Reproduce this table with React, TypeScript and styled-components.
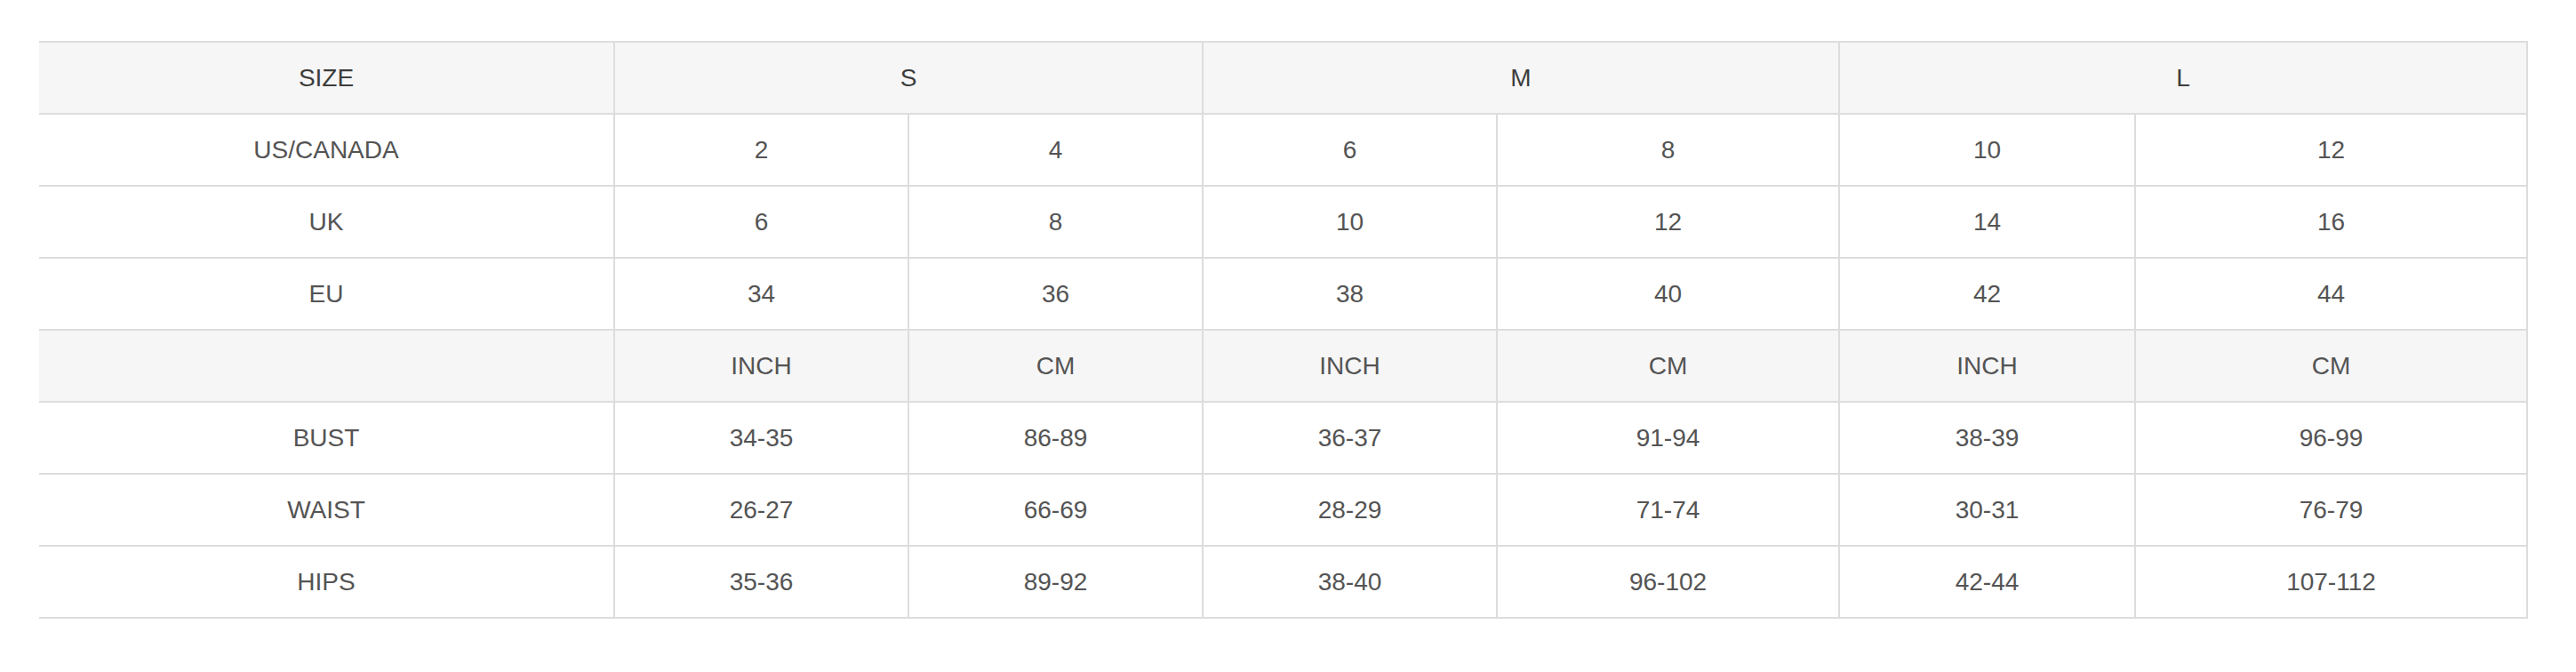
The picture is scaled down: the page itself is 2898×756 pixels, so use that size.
import React from 'react';
import styled, {createGlobalStyle} from 'styled-components';

const GlobalStyle = createGlobalStyle`
    html, body {
        margin: 0;
        padding: 0;
        background: #fff;
    }
    body {
        font-family: "Liberation Sans", Arial, Helvetica, sans-serif;
    }
`

type Cell = { text: string; span?: number };

const header: Cell[] = [
    {text: 'SIZE'},
    {text: 'S', span: 2},
    {text: 'M', span: 2},
    {text: 'L', span: 2},
];

const sizeRows: string[][] = [
    ['US/CANADA', '2', '4', '6', '8', '10', '12'],
    ['UK', '6', '8', '10', '12', '14', '16'],
    ['EU', '34', '36', '38', '40', '42', '44'],
];

const unitRow: string[] = ['', 'INCH', 'CM', 'INCH', 'CM', 'INCH', 'CM'];

const measureRows: string[][] = [
    ['BUST', '34-35', '86-89', '36-37', '91-94', '38-39', '96-99'],
    ['WAIST', '26-27', '66-69', '28-29', '71-74', '30-31', '76-79'],
    ['HIPS', '35-36', '89-92', '38-40', '96-102', '42-44', '107-112'],
];

export default function App() {
    return (
        <Page>
            <GlobalStyle/>
            <SizeTable>
                {header.map((c) => (
                    <TableCell key={c.text} $span={c.span} $shaded $head>{c.text}</TableCell>
                ))}
                {sizeRows.map((row) =>
                    row.map((v, i) => <TableCell key={row[0] + i}>{v}</TableCell>)
                )}
                {unitRow.map((v, i) => (
                    <TableCell key={'unit' + i} $shaded>{v}</TableCell>
                ))}
                {measureRows.map((row) =>
                    row.map((v, i) => <TableCell key={row[0] + i}>{v}</TableCell>)
                )}
            </SizeTable>
        </Page>
    );
}

const Page = styled.div`
    padding: 46px 54px 60px 44px;
    background: #fff;
`

const SizeTable = styled.div`
    display: grid;
    grid-template-columns: 648px 331px 331px 331px 385px 333px 441px;
    grid-auto-rows: 81px;
    width: 2800px;
    border-top: 2px solid #dddddd;
`

const TableCell = styled.div<{ $span?: number; $shaded?: boolean; $head?: boolean }>`
    grid-column: span ${(p) => p.$span || 1};
    display: flex;
    align-items: center;
    justify-content: center;
    box-sizing: border-box;
    border-right: 2px solid #dddddd;
    border-bottom: 2px solid #dddddd;
    background: ${(p) => (p.$shaded ? '#f6f6f6' : '#ffffff')};
    color: ${(p) => (p.$head ? '#3d3d3d' : '#545454')};
    font-size: 28px;
    line-height: 1;
`
